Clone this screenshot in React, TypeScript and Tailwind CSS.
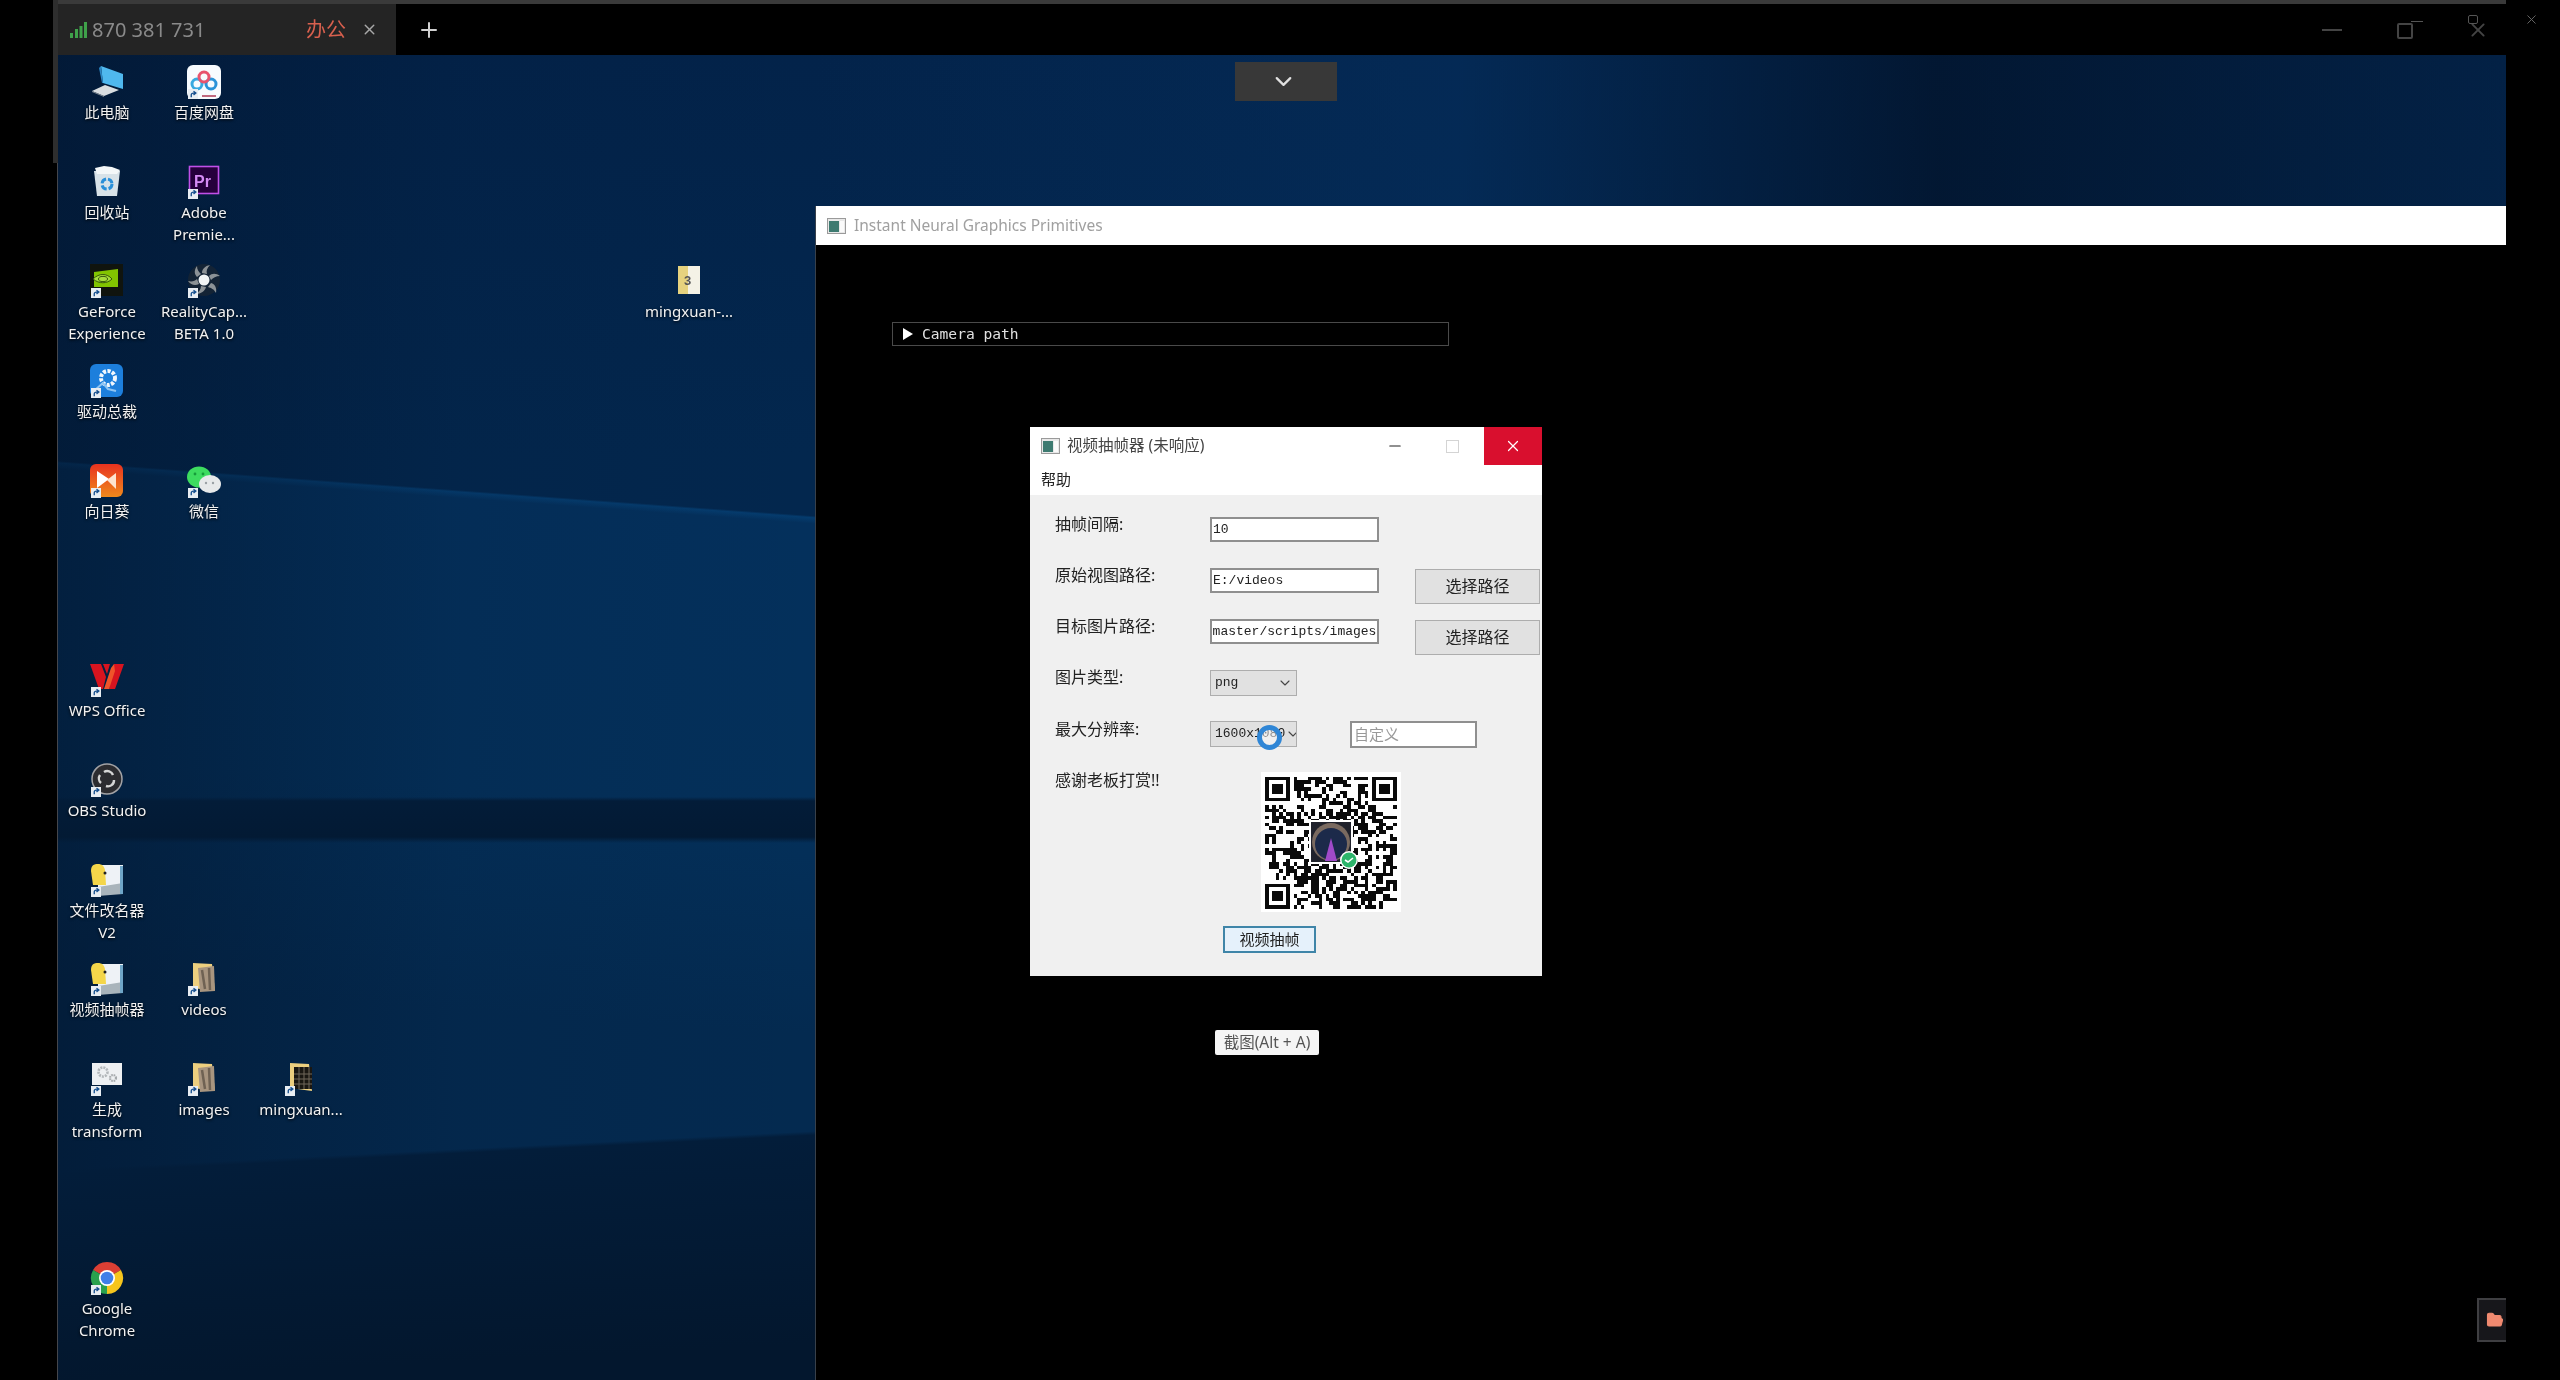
import { ReactNode } from 'react';
import { ChevronDown, FolderOpen, Minus, Plus, X } from 'lucide-react';

// ---- desktop icons, all on a 34x34 box ----
const Svg = ({ children }: { children: ReactNode }) => (
  <svg viewBox="0 0 34 34" className="w-[34px] h-[34px]">{children}</svg>
);

const ThisPc = () => (
  <Svg>
    <polygon points="11,1 33,9 33,24 13,18" fill="#4fb8ee" />
    <polygon points="11,1 13,18 12,18 9,3" fill="#2b86c4" />
    <polygon points="2,26 15,20 29,25 14,31" fill="#d9dde0" />
    <polygon points="2,26 14,31 14,32 2,27" fill="#7d8790" />
  </Svg>
);

const BaiduPan = () => (
  <Svg>
    <rect x="0" y="0" width="34" height="34" rx="6" fill="#f7fbfe" />
    <circle cx="10" cy="19" r="5" fill="none" stroke="#38a9e0" strokeWidth="3" />
    <circle cx="24" cy="19" r="5" fill="none" stroke="#2b93d8" strokeWidth="3" />
    <circle cx="17" cy="12" r="5" fill="none" stroke="#e8536e" strokeWidth="3" />
    <rect x="15" y="30" width="14" height="2" fill="#c0697f" />
  </Svg>
);

const RecycleBin = () => (
  <Svg>
    <polygon points="4,6 30,6 27,31 7,31" fill="#d8e2e8" />
    <polygon points="5,3 14,1 22,2 30,5 27,9 7,9" fill="#f4f7f8" />
    <circle cx="17" cy="19" r="5" fill="none" stroke="#2a8fd8" strokeWidth="3" strokeDasharray="6 2" />
  </Svg>
);

const Premiere = () => (
  <Svg>
    <rect x="2.5" y="1.5" width="29" height="27" fill="#26003c" stroke="#c04fe8" strokeWidth="1.6" />
    <text x="7" y="22" fontSize="16" fontWeight="700" fill="#d58bf5" fontFamily="Liberation Sans, sans-serif">Pr</text>
  </Svg>
);

const GeForce = () => (
  <Svg>
    <rect x="0" y="0" width="33" height="32" fill="#10140e" />
    <polygon points="4,8 28,5 28,23 4,23" fill="#82c400" />
    <path d="M3 15c6-6 14-6 19 0-5 5-13 5-19 0z" fill="#a6dc3c" stroke="#2d4a08" strokeWidth="0.9" />
    <ellipse cx="13" cy="15" rx="4.5" ry="2.6" fill="none" stroke="#2d4a08" strokeWidth="0.9" />
  </Svg>
);

const RealityCapture = () => (
  <Svg>
    <circle cx="17" cy="16" r="16" fill="#23282d" fillOpacity="0.55" />
    <g fill="#8c9296">
      <path d="M15 9C15 5 18 2 23 1 20 4 19 7 20 10z" />
      <path d="M22 12C25 9 29 9 33 12 29 12 26 14 24 16z" />
      <path d="M24 19C28 20 30 24 29 29 27 25 24 24 21 23z" />
      <path d="M19 23C18 27 14 30 9 30 12 28 14 25 14 22z" />
      <path d="M12 20C8 22 4 21 1 17 5 18 8 17 10 15z" />
      <path d="M10 13C7 10 7 6 10 2 10 6 12 8 14 10z" />
    </g>
    <circle cx="17" cy="16" r="5.5" fill="#f1f4f5" />
  </Svg>
);

const DriverBoss = () => (
  <Svg>
    <rect width="33" height="33" rx="6" fill="#1d7fdc" />
    <circle cx="18" cy="14" r="7" fill="none" stroke="#f1f7fd" strokeWidth="4" strokeDasharray="3.2 1.4" />
    <path d="M17 11v4h3" fill="none" stroke="#1d7fdc" strokeWidth="1.4" />
    <path d="M5 26l8-7 5 6 8 2" fill="none" stroke="#8fc4f2" strokeWidth="2" />
  </Svg>
);

const Sunlogin = () => (
  <Svg>
    <defs>
      <linearGradient id="sun" x1="0" y1="0" x2="0" y2="1">
        <stop offset="0" stopColor="#e8321f" />
        <stop offset="1" stopColor="#f08a1c" />
      </linearGradient>
    </defs>
    <rect width="33" height="33" rx="6" fill="url(#sun)" />
    <polygon points="7,7 19,15 7,24" fill="#fff" />
    <polygon points="26,9 17,16 26,25" fill="#fde4cf" />
  </Svg>
);

const WeChat = () => (
  <Svg>
    <ellipse cx="12" cy="13" rx="12" ry="10.5" fill="#3ddc5f" />
    <circle cx="8" cy="10" r="1.4" fill="#169c3a" />
    <circle cx="16" cy="10" r="1.4" fill="#169c3a" />
    <ellipse cx="23" cy="20" rx="11" ry="9" fill="#e7e9ea" />
    <circle cx="19" cy="19" r="1.2" fill="#9aa0a4" />
    <circle cx="26" cy="19" r="1.2" fill="#9aa0a4" />
  </Svg>
);

const Wps = () => (
  <Svg>
    <polygon points="0,1 11,1 16,14 13,26 9,26" fill="#d8141f" />
    <polygon points="24,1 34,1 25,26 19,26" fill="#d8141f" />
    <polygon points="14,26 21,5 24,1 25,8 19,26" fill="#f0542a" />
    <polygon points="13,1 20,1 17,11" fill="#d8141f" />
  </Svg>
);

const Obs = () => (
  <Svg>
    <circle cx="17" cy="16" r="15" fill="#2c2c30" stroke="#a3a3a6" strokeWidth="1.5" />
    <g fill="none" stroke="#d5d5d5" strokeWidth="2.4">
      <path d="M14 9a6 6 0 0 1 9 3" />
      <path d="M24 17a6 6 0 0 1-8 6" />
      <path d="M11 20a6 6 0 0 1-1-8" />
    </g>
  </Svg>
);

const Renamer = () => (
  <Svg>
    <rect x="8" y="2" width="25" height="22" fill="#eef2f6" />
    <path d="M1 8c0-6 3-7 7-7 4 0 6 2 7 6l1 15H3z" fill="#f4d64a" />
    <circle cx="15" cy="10" r="1.5" fill="#222" />
    <polygon points="8,24 33,20 33,31 8,33" fill="#a9b4bb" />
    <rect x="30" y="3" width="3" height="28" fill="#6fa6c8" />
  </Svg>
);

const ShellFolder = ({ dark }: { dark?: boolean }) => (
  <Svg>
    <polygon points="6,1 25,2 28,29 6,26" fill="#eccf7f" />
    {dark ? (
      <g>
        <rect x="10" y="5" width="18" height="22" fill="#1a1712" />
        <path d="M10 12h18M10 17h18M10 22h18M15 5v22M20 5v22M25 5v22" stroke="#70695a" strokeWidth="1" />
      </g>
    ) : (
      <g>
        <polygon points="11,6 27,4 28,29 13,30" fill="#a8957f" />
        <path d="M15 8l3 19M22 6l1 22" stroke="#6f6253" strokeWidth="2.5" />
      </g>
    )}
  </Svg>
);

const Transform = () => (
  <Svg>
    <rect x="2" y="1" width="30" height="22" fill="#eef0f2" />
    <circle cx="13" cy="10" r="4.5" fill="none" stroke="#b3b7ba" strokeWidth="2.6" strokeDasharray="2 1" />
    <circle cx="23" cy="16" r="3" fill="none" stroke="#a5a9ac" strokeWidth="2.2" strokeDasharray="1.6 0.8" />
  </Svg>
);

const Chrome = () => (
  <Svg>
    <path d="M17 17L3.1 9A16 16 0 0 1 30.9 9Z" fill="#db3f34" />
    <path d="M17 17L30.9 9A16 16 0 0 1 17 33Z" fill="#f6c51d" />
    <path d="M17 17L17 33A16 16 0 0 1 3.1 9Z" fill="#2aa14e" />
    <circle cx="17" cy="17" r="8" fill="#fff" />
    <circle cx="17" cy="17" r="6.3" fill="#3f7fe8" />
  </Svg>
);

const ZipFile = () => (
  <Svg>
    <rect x="6" y="2" width="22" height="28" fill="#f4f2e6" />
    <rect x="6" y="2" width="10" height="28" fill="#e6d27e" />
    <text x="12" y="21" fontSize="13" fontWeight="700" fill="#555" fontFamily="Liberation Sans, sans-serif">3</text>
  </Svg>
);

const ShortcutBadge = () => (
  <div className="absolute left-[1px] bottom-0 w-[10px] h-[10px] bg-[#e8edf2] flex items-center justify-center">
    <svg viewBox="0 0 10 10" className="w-[9px] h-[9px]">
      <path d="M2.5 8V5.5C2.5 4 3.5 3.4 5 3.4H6.5M5 1.4L7.6 3.4 5 5.4" fill="none" stroke="#17508f" strokeWidth="1.5" />
    </svg>
  </div>
);

interface DesktopItem {
  lines: string[];
  icon: ReactNode;
  cell: string;
  plain?: boolean;
}

const desktopItems: DesktopItem[] = [
  { lines: ['此电脑'], icon: <ThisPc />, cell: 'col-start-1 row-start-1', plain: true },
  { lines: ['百度网盘'], icon: <BaiduPan />, cell: 'col-start-2 row-start-1' },
  { lines: ['回收站'], icon: <RecycleBin />, cell: 'col-start-1 row-start-2', plain: true },
  { lines: ['Adobe', 'Premie...'], icon: <Premiere />, cell: 'col-start-2 row-start-2' },
  { lines: ['GeForce', 'Experience'], icon: <GeForce />, cell: 'col-start-1 row-start-3' },
  { lines: ['RealityCap...', 'BETA 1.0'], icon: <RealityCapture />, cell: 'col-start-2 row-start-3' },
  { lines: ['mingxuan-...'], icon: <ZipFile />, cell: 'col-start-7 row-start-3', plain: true },
  { lines: ['驱动总裁'], icon: <DriverBoss />, cell: 'col-start-1 row-start-4' },
  { lines: ['向日葵'], icon: <Sunlogin />, cell: 'col-start-1 row-start-5' },
  { lines: ['微信'], icon: <WeChat />, cell: 'col-start-2 row-start-5' },
  { lines: ['WPS Office'], icon: <Wps />, cell: 'col-start-1 row-start-7' },
  { lines: ['OBS Studio'], icon: <Obs />, cell: 'col-start-1 row-start-8' },
  { lines: ['文件改名器', 'V2'], icon: <Renamer />, cell: 'col-start-1 row-start-9' },
  { lines: ['视频抽帧器'], icon: <Renamer />, cell: 'col-start-1 row-start-10' },
  { lines: ['videos'], icon: <ShellFolder />, cell: 'col-start-2 row-start-10' },
  { lines: ['生成', 'transform'], icon: <Transform />, cell: 'col-start-1 row-start-11' },
  { lines: ['images'], icon: <ShellFolder />, cell: 'col-start-2 row-start-11' },
  { lines: ['mingxuan...'], icon: <ShellFolder dark />, cell: 'col-start-3 row-start-11' },
  { lines: ['Google', 'Chrome'], icon: <Chrome />, cell: 'col-start-1 row-start-13' },
];

const DesktopIcon = ({ item }: { item: DesktopItem }) => (
  <div className={`${item.cell} flex flex-col items-center pt-[5px]`}>
    <div className="relative w-[34px] h-[34px]">
      {item.icon}
      {!item.plain && <ShortcutBadge />}
    </div>
    <div className="mt-[2px] text-center text-[15px] leading-[22px] text-[#f2f2f2] whitespace-nowrap [text-shadow:0_1px_3px_#000]">
      {item.lines.map((l) => (
        <div key={l}>{l}</div>
      ))}
    </div>
  </div>
);

// Qt's default window icon
const QtIcon = () => (
  <svg viewBox="0 0 19 16" className="w-[19px] h-[16px] shrink-0">
    <rect x="0.5" y="0.5" width="18" height="15" fill="#e8e8e8" stroke="#9a9a9a" />
    <rect x="2" y="3" width="10" height="11" fill="#3d7a70" />
    <rect x="13" y="3" width="4" height="11" fill="#fafafa" />
  </svg>
);

// pseudo random qr matrix, only finder patterns are real
function qrPath(size: number) {
  let seed = 20417;
  const next = () => {
    seed = (seed * 1103515245 + 12345) & 0x7fffffff;
    return (seed >> 16) & 1;
  };
  let d = '';
  const inFinder = (x: number, y: number) =>
    (x < 8 && y < 8) || (x >= size - 8 && y < 8) || (x < 8 && y >= size - 8);
  for (let y = 0; y < size; y++) {
    for (let x = 0; x < size; x++) {
      const on = next();
      if (!inFinder(x, y) && on) d += `M${x} ${y}h1v1h-1z`;
    }
  }
  for (const [ox, oy] of [[0, 0], [size - 7, 0], [0, size - 7]]) {
    d += `M${ox} ${oy}h7v7h-7zM${ox + 1} ${oy + 1}v5h5v-5zM${ox + 2} ${oy + 2}h3v3h-3z`;
  }
  return d;
}

const QrCode = () => (
  <div className="relative w-[140px] h-[140px] bg-white flex items-center justify-center">
    <svg viewBox="0 0 37 37" className="w-[132px] h-[133px]" shapeRendering="crispEdges">
      <path d={qrPath(37)} fill="#0a0a0a" fillRule="evenodd" />
    </svg>
    {/* avatar + wechat mark */}
    <svg viewBox="0 0 60 60" className="absolute left-[48px] top-[48px] w-[60px] h-[60px]">
      <rect x="0" y="0" width="44" height="44" fill="#fff" />
      <rect x="2" y="2" width="40" height="40" fill="#20222c" />
      <circle cx="22" cy="22" r="19" fill="#7a6a60" />
      <circle cx="22" cy="24" r="16" fill="#1c2a4a" />
      <polygon points="22,18 28,41 16,41" fill="#a04ac8" />
      <circle cx="40" cy="40" r="9" fill="#fff" />
      <circle cx="40" cy="40" r="7.5" fill="#2cb56b" />
      <path d="M36 40l3 2 5-4" fill="none" stroke="#fff" strokeWidth="1.6" />
    </svg>
  </div>
);

const TextBox = ({ children, right }: { children: string; right?: boolean }) => (
  <div
    className={`w-[169px] h-[25px] bg-white border-2 border-[#8f8f8f] flex items-center overflow-hidden whitespace-nowrap font-['Liberation_Mono',monospace] text-[13px] text-[#222] ${right ? 'justify-center' : 'px-[1px]'}`}
  >
    {children}
  </div>
);

const PathButton = () => (
  <button className="ml-[36px] mt-[1px] pb-[2px] w-[125px] h-[35px] bg-[#e1e1e1] border border-[#adadad] text-[16px] text-[#222]">
    选择路径
  </button>
);

const Combo = ({ children }: { children: string }) => (
  <div className="w-[87px] h-[26px] bg-[#e1e1e1] border border-[#adadad] flex items-center justify-between pl-[4px] pr-[3px] font-['Liberation_Mono',monospace] text-[13px] text-[#222] overflow-hidden">
    <span className="whitespace-nowrap">{children}</span>
    <ChevronDown className="w-[16px] h-[16px] shrink-0 text-[#444]" strokeWidth={1.6} />
  </div>
);

const Row = ({ label, className, labelClass, children }: { label: string; className: string; labelClass: string; children?: ReactNode }) => (
  <div className={`flex items-start ${className}`}>
    <div className={`w-[155px] h-[22px] leading-[22px] text-[16px] text-[#222] whitespace-nowrap ${labelClass}`}>{label}</div>
    {children}
  </div>
);

const Dialog = () => (
  <div className="absolute left-[214px] top-[221px] w-[512px] h-[549px] bg-[#f0f0f0] flex flex-col">
    <div className="h-[38px] bg-white flex items-center pl-[11px] text-[#333]">
      <QtIcon />
      <span className="ml-[7px] text-[15.5px] text-[#444] whitespace-nowrap">视频抽帧器 (未响应)</span>
      <Minus className="ml-auto w-[18px] h-[18px] text-[#222]" strokeWidth={1.4} />
      <div className="ml-[42px] w-[13px] h-[13px] border border-[#d4d4d4]" />
      <div className="ml-[25px] w-[58px] h-full bg-[#d90f2e] flex items-center justify-center">
        <X className="w-[18px] h-[18px] text-white" strokeWidth={1.6} />
      </div>
    </div>
    <div className="h-[30px] bg-white flex items-center pl-[11px] pb-[2px] text-[15px] text-[#222]">帮助</div>

    <div className="flex-1 flex flex-col pl-[25px] pt-[22px]">
      <Row label="抽帧间隔:" className="h-[51px]" labelClass="-mt-[4px]">
        <TextBox>10</TextBox>
      </Row>
      <Row label="原始视图路径:" className="h-[51px]" labelClass="-mt-[4px]">
        <TextBox>E:/videos</TextBox>
        <PathButton />
      </Row>
      <Row label="目标图片路径:" className="h-[51px]" labelClass="-mt-[4px]">
        <TextBox right>master/scripts/images</TextBox>
        <PathButton />
      </Row>
      <Row label="图片类型:" className="h-[51px]" labelClass="-mt-[4px]">
        <Combo>png</Combo>
      </Row>
      <Row label="最大分辨率:" className="h-[51px]" labelClass="-mt-[3px]">
        <Combo>1600x1080</Combo>
        <div className="ml-[53px] w-[127px] h-[27px] bg-white border-2 border-[#8f8f8f] flex items-center pl-[2px] text-[15px] text-[#999]">
          自定义
        </div>
      </Row>
      <Row label="感谢老板打赏!!" className="h-[154px]" labelClass="-mt-[3px]">
        <div className="ml-[51px]">
          <QrCode />
        </div>
      </Row>
      <button className="ml-[168px] w-[93px] h-[27px] bg-[#e5f1fb] border-2 border-[#3f85a8] text-[15px] text-[#222]">
        视频抽帧
      </button>
    </div>

    {/* mouse highlight */}
    <div className="absolute left-[227px] top-[298px] w-[25px] h-[25px] rounded-full border-[5px] border-[#2f86d6] bg-white/50" />
  </div>
);

const RenderWindow = () => (
  <div className="absolute left-[757px] top-[151px] right-0 bottom-0 bg-black flex flex-col border-l border-[#38404a]">
    <div className="h-[39px] bg-white flex items-center pl-[11px] shrink-0">
      <QtIcon />
      <span className="ml-[8px] text-[15.5px] text-[#a0a0a0] whitespace-nowrap">Instant Neural Graphics Primitives</span>
    </div>
    <div className="ml-[76px] mt-[77px] w-[557px] h-[24px] border border-[#4a4a4a] flex items-center pl-[10px]">
      <div className="w-0 h-0 border-y-[6px] border-y-transparent border-l-[10px] border-l-white" />
      <span className="ml-[9px] font-['DejaVu_Sans_Mono',monospace] text-[14.6px] text-[#e0e0e0] whitespace-nowrap">
        Camera path
      </span>
    </div>
    <Dialog />
    {/* screenshot hint */}
    <div className="absolute left-[399px] top-[824px] w-[104px] h-[25px] bg-[#f5f5f5] rounded-[2px] flex items-center justify-center text-[15.5px] text-[#555] whitespace-nowrap">
      截图(Alt + A)
    </div>
    {/* side file button */}
    <div className="absolute right-0 bottom-[38px] w-[29px] h-[44px] bg-[#17171b] border-2 border-r-0 border-[#3f3f42] flex items-center justify-end pr-[2px]">
      <FolderOpen className="w-[18px] h-[18px] text-[#f08a70] fill-[#f08a70]" strokeWidth={1.5} />
    </div>
  </div>
);

export default function App() {
  return (
    <div className="w-[2560px] h-[1380px] flex bg-black overflow-hidden blur-[0.4px] font-['Noto_Sans','Noto_Sans_CJK_SC',sans-serif]">
      <div className="w-[53px] shrink-0" />
      <div className="w-[5px] shrink-0 flex flex-col">
        <div className="h-[163px] bg-[#2e2e2e]" />
        <div className="flex-1 border-r border-[#44464c]" />
      </div>

      <div className="w-[2448px] shrink-0 flex flex-col">
        <div className="h-[4px] bg-[#3a3a3a]" />

        {/* remote control tab bar */}
        <div className="h-[51px] bg-black flex items-center text-[20px]">
          <div className="w-[338px] h-full bg-[#242424] flex items-center pl-[12px] pr-[18px]">
            <svg viewBox="0 0 17 16" className="w-[17px] h-[16px]">
              <rect x="0" y="11" width="3" height="5" fill="#3fa14a" />
              <rect x="5" y="7" width="3" height="9" fill="#3fa14a" />
              <rect x="9.5" y="4" width="3" height="12" fill="#3fa14a" />
              <rect x="14" y="0" width="3" height="16" fill="#3fa14a" />
            </svg>
            <span className="ml-[5px] text-[#8a8a8a] whitespace-nowrap">870 381 731</span>
            <span className="ml-auto text-[#d8604e] whitespace-nowrap">办公</span>
            <X className="ml-[15px] w-[17px] h-[17px] text-[#a8a8a8]" strokeWidth={2} />
          </div>
          <Plus className="ml-[21px] w-[24px] h-[24px] text-[#d0d0d0]" strokeWidth={2} />

          <div className="ml-auto flex items-center pr-[19px] text-[#4a4a4a]">
            <div className="w-[20px] h-[2px] bg-[#444]" />
            <div className="relative ml-[55px] w-[26px] h-[18px]">
              <div className="absolute left-0 bottom-0 w-[16px] h-[16px] border-2 border-[#444] rounded-[2px]" />
              <div className="absolute right-0 top-0 w-[12px] h-[1px] bg-[#555]" />
            </div>
            <div className="relative ml-[46px] w-[18px] h-[18px]">
              <X className="absolute inset-0 w-[18px] h-[18px] scale-125 text-[#444]" strokeWidth={2} />
              <div className="absolute -left-[1px] -top-[6px] w-[10px] h-[9px] border border-[#555] rounded-[2px] bg-black" />
            </div>
          </div>
        </div>

        {/* remote desktop */}
        <div className="relative flex-1 overflow-hidden bg-[linear-gradient(177.1deg,transparent_1113px,#031d3a_1117px,#03172e_1325px),linear-gradient(180deg,transparent_742px,#031c38_746px,#031a34_782px,transparent_788px),linear-gradient(90deg,rgba(2,18,40,0.55)_0px,rgba(2,18,40,0.1)_400px,transparent_757px,rgba(5,48,96,0.5)_1400px,rgba(2,18,40,0.7)_1880px,rgba(3,30,62,0.4)_2448px),linear-gradient(184.15deg,transparent_582px,#053c6e_584px,#04305c_590px,#04305a_880px,#042a50_1100px),linear-gradient(180deg,#03234a_0px,#03274e_400px,#03274e_1325px)]">
          <div className="grid grid-cols-[repeat(7,97px)] grid-rows-[repeat(13,99.7px)] pt-[5px] pl-[0.5px]">
            {desktopItems.map((item) => (
              <DesktopIcon key={item.lines.join('-')} item={item} />
            ))}
          </div>
          <RenderWindow />
          {/* toolbar handle */}
          <div className="absolute left-[1177px] top-[7px] w-[102px] h-[39px] bg-[#383838] flex items-center justify-center pr-[5px]">
            <ChevronDown className="w-[27px] h-[27px] text-[#e0e0e0]" strokeWidth={2} />
          </div>
        </div>
      </div>

      <div className="flex-1 pt-[12px] pl-[18px]">
        <X className="w-[15px] h-[15px] text-[#6a6a6a]" strokeWidth={1.5} />
      </div>
    </div>
  );
}
